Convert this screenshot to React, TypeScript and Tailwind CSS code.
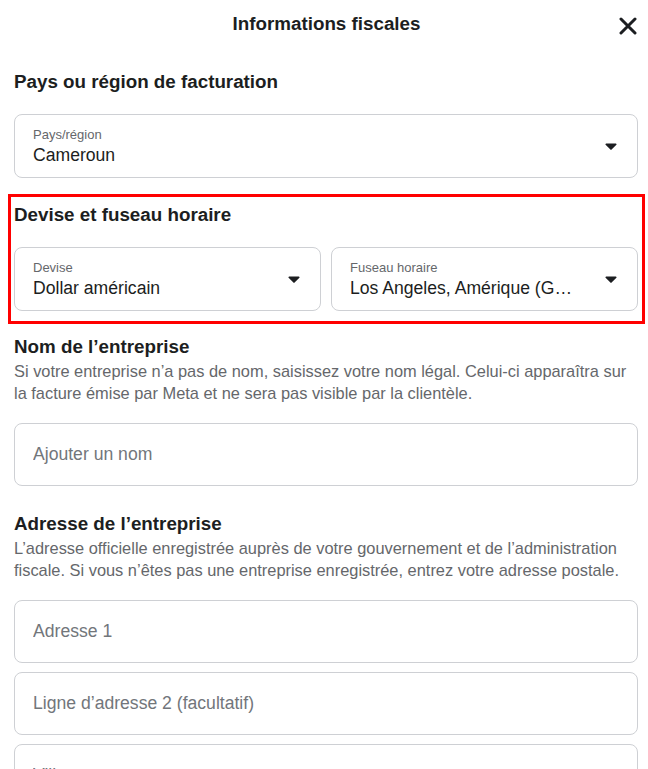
import { ReactNode } from 'react';

function Caret() {
  return (
    <svg width="12" height="7" viewBox="0 0 12 7" className="shrink-0">
      <path d="M1.2 0.5h9.6a0.8 0.8 0 0 1 0.6 1.3l-4.8 4.8a0.8 0.8 0 0 1-1.2 0L0.6 1.8A0.8 0.8 0 0 1 1.2 0.5z" fill="#1c1e21" />
    </svg>
  );
}

function SelectBox({ label, value }: { label: string; value: string }) {
  return (
    <div className="flex-1 min-w-0 h-[64px] border border-[#ced0d4] rounded-[8px] flex items-center pl-[18px] pr-[20px]">
      <div className="flex-1 min-w-0">
        <div className="text-[13px] leading-[16px] text-[#65676b]">{label}</div>
        <div className="text-[17.6px] leading-[22px] text-[#1c1e21] mt-[1px] truncate">{value}</div>
      </div>
      <Caret />
    </div>
  );
}

function TextBox({ placeholder }: { placeholder: string }) {
  return (
    <div className="h-[63px] border border-[#ced0d4] rounded-[8px] flex items-center px-[18px]">
      <input
        type="text"
        placeholder={placeholder}
        className="w-full bg-transparent text-[17.6px] text-[#1c1e21] placeholder:text-[#72767b] focus:outline-none"
      />
    </div>
  );
}

function Heading({ children }: { children: ReactNode }) {
  return <h2 className="text-[18.8px] leading-[20px] font-bold text-[#1c1e21]">{children}</h2>;
}

function Description({ children }: { children: ReactNode }) {
  return <p className="mt-[3px] text-[16.4px] leading-[22px] text-[#65676b]">{children}</p>;
}

export default function App() {
  return (
    <div className="w-[648px] h-[769px] overflow-hidden bg-white font-['Liberation_Sans',Arial,sans-serif]">
      {/* Header */}
      <div className="relative h-[48px] flex items-center justify-center pl-[5px]">
        <h1 className="text-[18.8px] font-bold text-[#1c1e21]">Informations fiscales</h1>
        <button className="absolute right-[10px] top-[16px] p-[1px]">
          <svg width="18" height="18" viewBox="0 0 18 18">
            <path d="M2 2L16 16M16 2L2 16" stroke="#1c1e21" strokeWidth="3" strokeLinecap="round" />
          </svg>
        </button>
      </div>

      <div className="pl-[14px] pr-[10px] mt-[24px]">
        <Heading>Pays ou région de facturation</Heading>
        <div className="mt-[22px] flex">
          <SelectBox label="Pays/région" value="Cameroun" />
        </div>
      </div>

      <div className="mt-[16px] ml-[8px] mr-[3px] border-[3px] border-[#f00] pl-[3px] pr-[4px] pt-[8px] pb-[10px]">
        <Heading>Devise et fuseau horaire</Heading>
        <div className="mt-[22px] flex gap-[10px]">
          <SelectBox label="Devise" value="Dollar américain" />
          <SelectBox label="Fuseau horaire" value="Los Angeles, Amérique (G…" />
        </div>
      </div>

      <div className="pl-[14px] pr-[10px] mt-[13px]">
        <Heading>Nom de l’entreprise</Heading>
        <Description>
          Si votre entreprise n’a pas de nom, saisissez votre nom légal. Celui-ci apparaîtra sur la facture émise par
          Meta et ne sera pas visible par la clientèle.
        </Description>
        <div className="mt-[19px]">
          <TextBox placeholder="Ajouter un nom" />
        </div>

        <div className="mt-[28px]">
          <Heading>Adresse de l’entreprise</Heading>
          <Description>
            L’adresse officielle enregistrée auprès de votre gouvernement et de l’administration fiscale. Si vous n’êtes
            pas une entreprise enregistrée, entrez votre adresse postale.
          </Description>
        </div>
        <div className="mt-[19px] flex flex-col gap-[9px]">
          <TextBox placeholder="Adresse 1" />
          <TextBox placeholder="Ligne d’adresse 2 (facultatif)" />
          <TextBox placeholder="Ville" />
        </div>
      </div>
    </div>
  );
}
